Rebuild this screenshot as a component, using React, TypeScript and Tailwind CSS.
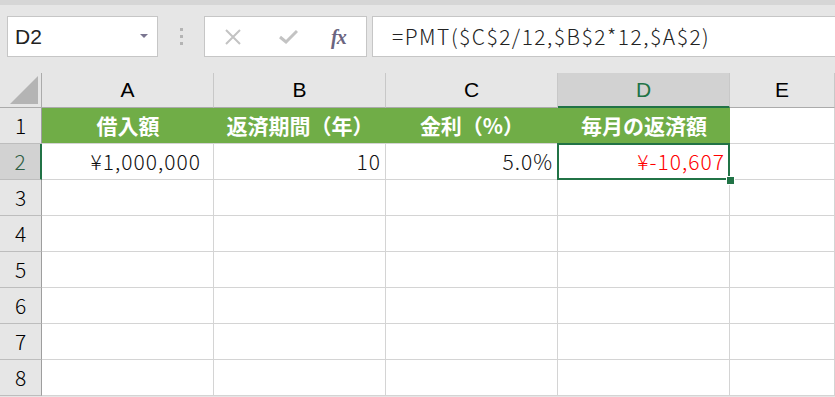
import React from "react";

const jp = "font-['Noto_Sans_CJK_JP',sans-serif]";
const lat = "font-['Liberation_Sans','Noto_Sans_CJK_JP',sans-serif]";

const cols = ["A", "B", "C", "D", "E"];

function ColHeader({ label, selected }: { label: string; selected?: boolean }) {
  return (
    <div
      className={
        "flex items-center justify-center border-r border-[#c8c8c8] text-[21px] " +
        lat +
        (selected
          ? " bg-[#d2d2d2] text-[#217346] border-b-2 border-b-[#217346]"
          : " bg-[#e6e6e6] text-black border-b border-b-[#ababab]")
      }
    >
      {label}
    </div>
  );
}

function RowHeader({ n, selected }: { n: number; selected?: boolean }) {
  return (
    <div
      className={
        "flex items-center justify-center border-b border-[#bdbdbd] text-[21px] font-light " +
        jp +
        (selected
          ? " bg-[#d2d2d2] text-[#2f5f45] border-r-2 border-r-[#217346]"
          : " bg-[#e6e6e6] text-black border-r border-r-[#9e9e9e]")
      }
    >
      {n}
    </div>
  );
}

function Cell({ children, className = "" }: { children?: React.ReactNode; className?: string }) {
  return (
    <div className={"flex items-center border-r border-b border-[#d4d4d4] bg-white text-[21px] font-light tracking-[1px] " + jp + " " + className}>
      {children}
    </div>
  );
}

function HeadCell({ children }: { children: React.ReactNode }) {
  return (
    <div className={"flex items-center justify-center bg-[#70ad47] border-b border-[#d4d4d4] text-[21px] font-bold text-white " + jp}>
      {children}
    </div>
  );
}

export default function App() {
  return (
    <div className="w-[835px] h-[397px] overflow-hidden bg-[#e6e6e6] flex flex-col">
      <div className="h-[5px] bg-[#d6d6d6] shrink-0" />
      {/* formula bar */}
      <div className="flex items-center h-[41px] mt-[11px] shrink-0">
        <div className="ml-[7px] w-[151px] h-[41px] bg-white border border-[#c6c6c6] flex items-center justify-between pl-[7px] pr-[9px]">
          <span className={"text-[21px] text-[#222] " + lat}>D2</span>
          <svg width="8" height="5" viewBox="0 0 8 5">
            <path d="M0 0h8L4 4z" fill="#7a7590" />
          </svg>
        </div>
        <div className="w-[46px] flex flex-col items-center gap-[4px]">
          <span className="w-[3px] h-[3px] bg-[#b4b4b4]" />
          <span className="w-[3px] h-[3px] bg-[#b4b4b4]" />
          <span className="w-[3px] h-[3px] bg-[#b4b4b4]" />
        </div>
        <div className="w-[163px] h-[41px] bg-white border border-[#c6c6c6] flex items-center">
          <svg className="ml-[20px]" width="16" height="16" viewBox="0 0 16 16">
            <path d="M1 1L15 15M15 1L1 15" stroke="#c3c3c3" strokeWidth="2" />
          </svg>
          <svg className="ml-[38px]" width="19" height="15" viewBox="0 0 19 15">
            <path d="M1 8L7 13L18 2" stroke="#c3c3c3" strokeWidth="3" fill="none" />
          </svg>
          <span className="ml-[33px] text-[20px] italic font-bold text-[#6b6580] font-['Liberation_Serif',serif] tracking-[-1px]">fx</span>
        </div>
        <div className="ml-[5px] flex-1 h-[41px] bg-white border border-[#c6c6c6] border-r-0 flex items-center pl-[19px]">
          <span className={"text-[21px] font-light tracking-[1.5px] text-[#222] " + jp}>=PMT($C$2/12,$B$2*12,$A$2)</span>
        </div>
      </div>
      {/* sheet */}
      <div className="mt-[16px] grid grid-cols-[42px_172px_172px_172px_172px_1fr] grid-rows-[35px_repeat(8,36px)]">
        <div className="bg-[#e6e6e6] border-r border-b border-[#ababab] flex items-end justify-end pr-[3px] pb-[3px]">
          <svg width="28" height="28" viewBox="0 0 28 28">
            <path d="M28 0V28H0z" fill="#b4b4b4" />
          </svg>
        </div>
        {cols.map((c) => (
          <ColHeader key={c} label={c} selected={c === "D"} />
        ))}

        <RowHeader n={1} />
        <HeadCell>借入額</HeadCell>
        <HeadCell>返済期間（年）</HeadCell>
        <HeadCell>金利（%）</HeadCell>
        <HeadCell>毎月の返済額</HeadCell>
        <Cell />

        <RowHeader n={2} selected />
        <Cell className="justify-end pr-[12px] text-[#111]">¥1,000,000</Cell>
        <Cell className="justify-end pr-[4px] text-[#111]">10</Cell>
        <Cell className="justify-end pr-[4px] text-[#111]">5.0%</Cell>
        <div className="relative -mt-px -ml-px">
          <div className={"h-[37px] flex items-center justify-end pr-[3px] border-2 border-[#217346] bg-white text-[21px] font-light tracking-[1px] text-[#ff0000] " + jp}>
            ¥-10,607
          </div>
          <span className="absolute right-[-4px] bottom-[-4px] w-[7px] h-[7px] bg-[#217346] outline outline-1 outline-white" />
        </div>
        <Cell />

        {[3, 4, 5, 6, 7, 8].map((n) => (
          <React.Fragment key={n}>
            <RowHeader n={n} />
            <Cell />
            <Cell />
            <Cell />
            <Cell />
            <Cell />
          </React.Fragment>
        ))}
      </div>
    </div>
  );
}
